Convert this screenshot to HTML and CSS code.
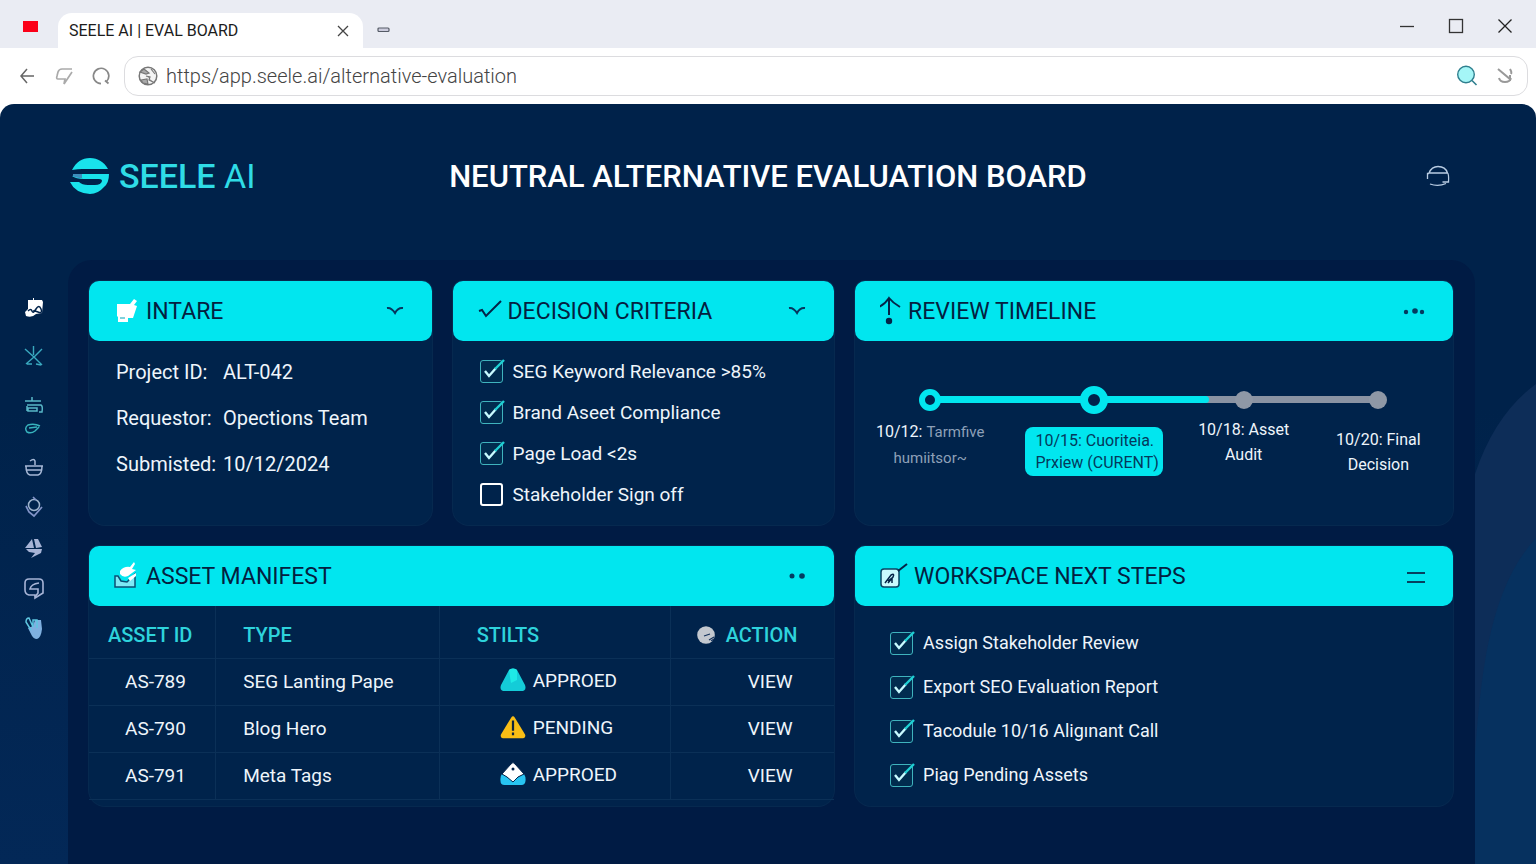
FILE: index.html
```html
<!DOCTYPE html>
<html lang="en">
<head>
  <meta charset="utf-8">
  <title>SEELE AI | EVAL BOARD</title>
  <link rel="stylesheet" href="styles.css">
</head>
<body>
<svg class="sprite" width="0" height="0" aria-hidden="true">
  <symbol id="tick" viewBox="0 0 28 28">
    <path d="M7 14l4 5 7-8" fill="none" stroke="#c9fbff" stroke-width="2.4"/>
    <path d="M17 12l9-9" fill="none" stroke="#1fd0d4" stroke-width="2.4"/>
  </symbol>
  <symbol id="chevron" viewBox="0 0 18 10">
    <path d="M1 2c3-.5 5.500 1 8 5 2-4 4-5.500 8-5" fill="none" stroke="#06345c" stroke-width="2"/>
  </symbol>
</svg>

<div class="tabs">
  <span class="flag"></span>
  <div class="tab">
    <span>SEELE AI | EVAL BOARD</span>
    <button class="icon-btn" aria-label="Close tab"><svg width="12" height="12" viewBox="0 0 12 12"><path d="M1 1l10 10M11 1L1 11" stroke="#444" stroke-width="1.300"/></svg></button>
  </div>
  <button class="icon-btn new-tab" aria-label="New tab"><svg width="14" height="6" viewBox="0 0 14 6"><rect x="1" y="1" width="11" height="3.500" rx="1" fill="#ccd" stroke="#555b66" stroke-width="1.200"/></svg></button>
  <div class="window">
    <button class="icon-btn" aria-label="Minimize"><svg width="16" height="16" viewBox="0 0 16 16"><path d="M1 8.500h14" stroke="#333" stroke-width="1.300"/></svg></button>
    <button class="icon-btn" aria-label="Maximize"><svg width="16" height="16" viewBox="0 0 16 16"><rect x="1.500" y="1.500" width="13" height="13" fill="none" stroke="#333" stroke-width="1.300"/></svg></button>
    <button class="icon-btn" aria-label="Close"><svg width="16" height="16" viewBox="0 0 16 16"><path d="M1.500 1.500l13 13M14.500 1.500l-13 13" stroke="#222" stroke-width="1.300"/></svg></button>
  </div>
</div>

<div class="toolbar">
  <button class="icon-btn" aria-label="Back"><svg width="18" height="18" viewBox="0 0 18 18"><path d="M16 9H3M9 2L3 9l6 7" fill="none" stroke="#666" stroke-width="1.500"/></svg></button>
  <button class="icon-btn" aria-label="Forward"><svg width="18" height="18" viewBox="0 0 18 18"><path d="M17 5l-8 12 1-5H3q-2 0-1-3l1-4q1-3 4-3h10" fill="none" stroke="#aaa" stroke-width="1.700"/></svg></button>
  <button class="icon-btn" aria-label="Reload"><svg width="18" height="18" viewBox="0 0 18 18"><path d="M14.500 14.500A7.700 7.700 0 1 0 9 16.700M13 13.500l3.500 3" fill="none" stroke="#888" stroke-width="1.700"/></svg></button>
  <div class="address">
    <svg width="20" height="20" viewBox="0 0 20 20"><circle cx="10" cy="10" r="8.800" fill="#f4f4f4" stroke="#777" stroke-width="1.500"/><path d="M2 6l4-3 5 4-3 1-6-2zM8 10l4 1-1 3 6 3M3 14l6-1 1 5-5-1zM13 3l4 5" fill="#aaa" stroke="#777" stroke-width="1.200"/></svg>
    <input type="text" aria-label="Address" value="https/app.seele.ai/alternative-evaluation">
    <button class="icon-btn" aria-label="Search"><svg width="22" height="22" viewBox="0 0 22 22"><circle cx="10" cy="9.500" r="8.300" fill="#a5f6f7" stroke="#2f7f8e" stroke-width="1.400"/><path d="M16 15.500l4.500 4.500" stroke="#2f7f8e" stroke-width="1.600"/></svg></button>
    <button class="icon-btn" aria-label="Extensions"><svg width="18" height="18" viewBox="0 0 18 18"><path d="M2 2l12 10V8M14 2q2 3 1 5M3 11q1 4 6 4 5 0 6-4" fill="none" stroke="#999" stroke-width="2"/></svg></button>
  </div>
</div>

<div class="app">
  <svg class="hills" viewBox="0 0 61 480" aria-hidden="true">
    <path d="M0 90Q20 30 61 0V480H0Z" fill="#0d2d58"/>
    <path d="M0 480V370C6 290 14 205 61 154V480Z" fill="#06315f"/>
  </svg>

  <header class="top">
    <a class="logo" href="#">
      <svg width="40" height="36" viewBox="0 0 40 36" fill="#19e3ec">
        <path d="M2 12C6 4 12 0 20 0s14 4 18 11H12q-4 0-10 1z"/>
        <path d="M2 18l9-2h28q0 9-5 13-6 7-14 7Q5 35 0 24h9q3 3 9 3h7q6 0 7-4 0-2-3-2H14Q6 21 2 18z"/>
        <path d="M3 16h9v4q-6 0-9-2z" fill="#3d8ebc"/>
      </svg>
      <span><b>SEELE</b> AI</span>
    </a>
    <h1>NEUTRAL ALTERNATIVE EVALUATION BOARD</h1>
    <button class="icon-btn profile" aria-label="Profile"><svg width="24" height="24" viewBox="0 0 24 24"><path d="M3 9C5 4 8 2.500 12 2.500S20 4 21.500 9zM1.500 15V9.500H3M21.500 9q1.500 1 1 9h-6M4 20q8 3 16-.5" fill="none" stroke="#b9cde3" stroke-width="1.300"/></svg></button>
  </header>

  <div class="main">
    <nav>
      <a href="#" aria-label="Home"><svg width="20" height="24" viewBox="0 0 20 24"><path d="M4 4h5V2h1v2h8l1 2-1 11-6 1q-4 4-10 2l-1-4 3-3z" fill="#fff"/><path d="M4 15q3-3 4 0t4-2 5 0-3 3-4-1" fill="none" stroke="#00224a" stroke-width="1.500"/></svg></a>
      <a href="#" aria-label="Explore"><svg width="20" height="24" viewBox="0 0 20 24"><path d="M9.500 2v9M1 5l9 8 8-8M10 13l-8 7M10 13l8 8M3 20h5M12 20l5 1" fill="none" stroke="#39a9bf" stroke-width="1.400"/></svg></a>
      <a href="#" aria-label="Files"><svg width="20" height="38" viewBox="0 0 20 38"><path d="M8 1v4M1 5h16M3 9h14q2 1 1 7h-3M4 12h9v3H4zM3 15v-5" fill="none" stroke="#58b8c8" stroke-width="1.500"/><path d="M16 30q-6-3-12-1-4 3-1 7 4 2 8-1l4-4M5 32l8-1" fill="none" stroke="#37b3bd" stroke-width="1.500"/></svg></a>
      <a href="#" aria-label="Inbox"><svg width="20" height="24" viewBox="0 0 20 24"><path d="M1 10h18M2 10q0 8 4 9h8q4-1 4-9M3 14h14M6 5q4-3 5 0v4" fill="none" stroke="#a6b8d6" stroke-width="1.500"/></svg></a>
      <a href="#" aria-label="Reports"><svg width="20" height="24" viewBox="0 0 20 24"><circle cx="10" cy="9" r="5.500" fill="none" stroke="#9fb4cc" stroke-width="1.500"/><path d="M2 10l3 6 5 4 8-9M9 1l3 3" fill="none" stroke="#8294c8" stroke-width="1.700"/></svg></a>
      <a href="#" aria-label="Activity"><svg width="20" height="24" viewBox="0 0 20 24"><path d="M1 12l7-9 2 9zM10 3h4l4 8-6 1zM2 13h16l-1 4-10 5 4-5-6-1z" fill="#a7b4d6"/></svg></a>
      <a href="#" aria-label="Messages"><svg width="20" height="24" viewBox="0 0 20 24"><path d="M5 3h10q4 0 4 4v10l-8 5v-3H5q-4-1-4-5V7q0-4 4-4z" fill="none" stroke="#a7b4d6" stroke-width="1.600"/><path d="M15 7Q7 8 6 13h8v4l-3 4" fill="none" stroke="#a7b4d6" stroke-width="1.600"/></svg></a>
      <a href="#" aria-label="Tools"><svg width="20" height="24" viewBox="0 0 20 24"><path d="M9 10l2-6h6l1 9q-1 9-5 10-4 0-6-5l-3-6z" fill="#7fb0e0"/><path d="M7 14L2 6q0-4 3-4l4 9V4h4v8" fill="none" stroke="#5ec6e0" stroke-width="1.500"/></svg></a>
    </nav>

    <main class="board">
      <section class="card">
        <div class="card-head">
          <svg width="26" height="26" viewBox="0 0 26 26"><path d="M3 6h13l4-5 3 2-3 4 3 1-4 12h-5v4H4v-5l-1-1z" fill="#fff"/><path d="M6 20h5" stroke="#00a5b8"/></svg>
          <h2>INTARE</h2>
          <button class="icon-btn" aria-label="Collapse"><svg width="18" height="10"><use href="#chevron"/></svg></button>
        </div>
        <dl>
          <dt>Project ID:</dt><dd>ALT-042</dd>
          <dt>Requestor:</dt><dd>Opections Team</dd>
          <dt>Submisted:</dt><dd>10/12/2024</dd>
        </dl>
      </section>

      <section class="card">
        <div class="card-head">
          <svg width="24" height="26" viewBox="0 0 24 26"><path d="M1 13l3-1 4 6L23 3" fill="none" stroke="#042447" stroke-width="2"/></svg>
          <h2>DECISION CRITERIA</h2>
          <button class="icon-btn" aria-label="Collapse"><svg width="18" height="10"><use href="#chevron"/></svg></button>
        </div>
        <ul class="checks">
          <li><label><span class="box"><input type="checkbox" checked><svg><use href="#tick"/></svg></span>SEG Keyword Relevance &gt;85%</label></li>
          <li><label><span class="box"><input type="checkbox" checked><svg><use href="#tick"/></svg></span>Brand Aseet Compliance</label></li>
          <li><label><span class="box"><input type="checkbox" checked><svg><use href="#tick"/></svg></span>Page Load &lt;2s</label></li>
          <li><label><span class="box"><input type="checkbox"><svg><use href="#tick"/></svg></span>Stakeholder Sign off</label></li>
        </ul>
      </section>

      <section class="card">
        <div class="card-head">
          <svg width="22" height="30" viewBox="0 0 22 30"><path d="M9 2v17M-1 11Q5 8 9 2q4 5 11 9" fill="none" stroke="#042447" stroke-width="2"/><circle cx="9" cy="25" r="3.200" fill="#042447"/></svg>
          <h2>REVIEW TIMELINE</h2>
          <button class="icon-btn" aria-label="More"><svg width="22" height="10" viewBox="0 0 22 10" fill="#043a60"><circle cx="3" cy="6" r="2.200"/><circle cx="12" cy="5" r="2.800"/><circle cx="19" cy="6" r="2.200"/></svg></button>
        </div>
        <div class="timeline">
          <div class="track"><span style="width: 62%"></span></div>
          <ol>
            <li class="done"><i></i><p>10/12: <small>Tarmfive<br>humiitsor~</small></p></li>
            <li class="current"><i></i><p>10/15: Cuoriteia.<br>Prxiew (CURENT)</p></li>
            <li><i></i><p>10/18: Asset<br>Audit</p></li>
            <li class="last"><i></i><p>10/20: Final<br>Decision</p></li>
          </ol>
        </div>
      </section>

      <section class="card wide">
        <div class="card-head">
          <svg width="26" height="28" viewBox="0 0 26 28"><path d="M1 14v11h20V12l-8 8-6-1-3-5z" fill="#7de9f5" stroke="#0a4f74" stroke-width="1.500"/><path d="M6 9q4-5 10-4l4-5 1 2-3 5 4 1-8 6q-5 2-8-2zM14 16l8-5v3l-6 5z" fill="#fff"/></svg>
          <h2>ASSET MANIFEST</h2>
          <button class="icon-btn" aria-label="More"><svg width="18" height="10" viewBox="0 0 18 10" fill="#043a60"><circle cx="4" cy="5" r="2.500"/><circle cx="14" cy="5" r="2.800"/></svg></button>
        </div>
        <table>
          <thead>
            <tr>
              <th>ASSET ID</th>
              <th>TYPE</th>
              <th>STILTS</th>
              <th><svg width="18" height="18" viewBox="0 0 18 18"><circle cx="9" cy="9" r="8.800" fill="#c3c8cf"/><path d="M7 10l6-2M12 14l5-3M14 15l3-2" stroke="#12305a" stroke-width="1.200"/></svg>ACTION</th>
            </tr>
          </thead>
          <tbody>
            <tr>
              <td>AS-789</td>
              <td>SEG Lanting Pape</td>
              <td><svg width="26" height="24" viewBox="0 0 26 24"><path d="M9 2q1-1.500 4-1.500T17 2l8 15q2 6-4 6H5q-6 0-4-6z" fill="#14ccd8"/><path d="M9 2q1-1.500 4-1.500T17 2l0 10-6 3-1-6z" fill="#1eeae6"/></svg>APPROED</td>
              <td><a href="#">VIEW</a></td>
            </tr>
            <tr>
              <td>AS-790</td>
              <td>Blog Hero</td>
              <td><svg width="26" height="24" viewBox="0 0 28 24"><path d="M12 2q2-3 4 0l11 18q1 4-2 4H3q-3 0-2-4z" fill="#f9be15"/><path d="M14 5v11M14 18v3" stroke="#10243c" stroke-width="2.400"/></svg>PENDING</td>
              <td><a href="#">VIEW</a></td>
            </tr>
            <tr>
              <td>AS-791</td>
              <td>Meta Tags</td>
              <td><svg width="26" height="24" viewBox="0 0 26 24"><path d="M2 12l11 6 11-6q2 3 1.500 7-.5 4-4 4h-17q-4 0-4-4Q0 14 2 12z" fill="#27c4f2"/><path d="M11 2q2-3 4 0l9 10-6 3-5 5-6-5-5-3z" fill="#fff" stroke="#00224a"/><circle cx="13" cy="7" r="1.500" fill="#00224a"/></svg>APPROED</td>
              <td><a href="#">VIEW</a></td>
            </tr>
          </tbody>
        </table>
      </section>

      <section class="card">
        <div class="card-head">
          <svg width="28" height="26" viewBox="0 0 28 26"><rect x="1" y="6" width="18" height="18" rx="3" fill="#c8fafd" stroke="#0a4463" stroke-width="1.500"/><path d="M18 8l9-7" stroke="#042447" stroke-width="2"/><path d="M5 20l6-8q4-2 2 2l-5 6M8 18l4-3v5" fill="none" stroke="#042447" stroke-width="1.500"/></svg>
          <h2>WORKSPACE NEXT STEPS</h2>
          <button class="icon-btn" aria-label="Menu"><svg width="18" height="14" viewBox="0 0 18 14"><path d="M0 4h18M0 13h18" stroke="#06405f" stroke-width="1.800"/></svg></button>
        </div>
        <ul class="checks steps">
          <li><label><span class="box"><input type="checkbox" checked><svg><use href="#tick"/></svg></span>Assign Stakeholder Review</label></li>
          <li><label><span class="box"><input type="checkbox" checked><svg><use href="#tick"/></svg></span>Export SEO Evaluation Report</label></li>
          <li><label><span class="box"><input type="checkbox" checked><svg><use href="#tick"/></svg></span>Tacodule 10/16 Aligınant Call</label></li>
          <li><label><span class="box"><input type="checkbox" checked><svg><use href="#tick"/></svg></span>Piag Pending Assets</label></li>
        </ul>
      </section>
    </main>
  </div>
</div>
</body>
</html>
```

FILE: styles.css
```css
* {
  box-sizing: border-box;
}
body {
  margin: 0;
  min-height: 100vh;
  display: flex;
  flex-direction: column;
  background: #fff;
  font-family: Roboto, "Liberation Sans", sans-serif;
  font-size: 19px;
  color: #eef5fb;
}
h1, h2, p, ul, ol, dl, dd {
  margin: 0;
  padding: 0;
}
ul, ol {
  list-style: none;
}
a {
  color: inherit;
  text-decoration: none;
}
svg {
  display: block;
  flex: none;
}
.sprite {
  position: absolute;
}
.icon-btn {
  display: flex;
  align-items: center;
  justify-content: center;
  padding: 0;
  border: 0;
  background: none;
  cursor: pointer;
}

/* browser bar */
.tabs {
  display: flex;
  height: 48px;
  padding: 0 23px;
  background: #eaecf3;
}
.flag {
  width: 15px;
  height: 11px;
  margin: 21px 20px 0 0;
  background: #fb0018;
}
.tab {
  display: flex;
  align-items: center;
  justify-content: space-between;
  width: 305px;
  margin-top: 13px;
  padding: 0 14px 0 11px;
  border-radius: 14px 14px 0 0;
  background: #fff;
  color: #1c1c1c;
  font-size: 16px;
}
.new-tab {
  margin: 12px 0 0 14px;
  height: 36px;
}
.window {
  display: flex;
  gap: 33px;
  margin-left: auto;
  padding-top: 4px;
}
.toolbar {
  display: flex;
  align-items: center;
  gap: 19px;
  height: 56px;
  padding: 0 8px 0 18px;
}
.address {
  display: flex;
  flex: 1;
  align-items: center;
  gap: 8px;
  height: 40px;
  margin-left: -5px;
  padding: 0 13px;
  border: 1px solid #dcdcdf;
  border-radius: 14px;
}
.address input {
  flex: 1;
  padding: 0;
  border: 0;
  outline: 0;
  background: none;
  font: 300 20px Roboto, "Liberation Sans", sans-serif;
  color: #444;
}
.address .icon-btn:last-child {
  margin-left: 10px;
}

/* app */
.app {
  position: relative;
  display: flex;
  flex: 1;
  flex-direction: column;
  border-radius: 14px 14px 0 0;
  background: linear-gradient(#00224a 40%, #032857);
}
.hills {
  position: absolute;
  right: 0;
  bottom: 0;
  width: 61px;
  height: 480px;
}
.top {
  display: grid;
  grid-template-columns: 1fr auto 1fr;
  align-items: center;
  height: 156px;
  padding: 0 70px 12px;
}
.logo {
  display: flex;
  align-items: center;
  gap: 9px;
  color: #2fdce6;
  font-size: 34px;
}
.logo b {
  font-weight: 500;
}
h1 {
  color: #fff;
  font-size: 31px;
  font-weight: 500;
}
.profile {
  justify-self: end;
  width: 56px;
  height: 40px;
}
.main {
  display: flex;
  flex: 1;
}
nav {
  display: flex;
  flex-direction: column;
  align-items: center;
  gap: 16px;
  width: 68px;
  padding-top: 36px;
}
nav a:first-child {
  margin-bottom: 8px;
}
nav a:nth-child(3) {
  margin: 12px 0 6px;
}

/* cards */
.board {
  display: grid;
  flex: 1;
  grid-template-columns: 342fr 381fr 597fr;
  grid-template-rows: 244px 260px;
  gap: 21px;
  margin-right: 61px;
  padding: 21px 22px 58px 21px;
  border-radius: 24px 24px 0 0;
  background: #001b44;
  position: relative;
}
.card {
  border-radius: 10px 10px 16px 16px;
  background: #00234b;
  box-shadow: 0 0 0 1px #06294f;
}
.wide {
  grid-column: span 2;
}
.card-head {
  display: flex;
  align-items: center;
  gap: 6px;
  height: 60px;
  padding: 0 28px 0 25px;
  border-radius: 10px;
  background: #01e6ef;
  color: #04203f;
}
.card-head .icon-btn {
  margin-left: auto;
}
h2 {
  font-size: 23px;
  font-weight: 400;
}
dl {
  display: grid;
  grid-template-columns: 107px 1fr;
  padding: 8px 27px;
  font-size: 20px;
  line-height: 46px;
}
.checks {
  padding: 10px 27px;
  line-height: 41px;
}
.steps {
  padding: 15px 35px;
  font-size: 18px;
  line-height: 44px;
}
.checks label {
  display: flex;
  align-items: center;
  gap: 10px;
}
.box {
  position: relative;
  height: 23px;
}
.box input {
  display: block;
  appearance: none;
  width: 23px;
  height: 23px;
  margin: 0;
  border: 2px solid #fff;
  border-radius: 3px;
}
.box input:checked {
  border: 1px solid #3fb3bd;
  background: #012c4f;
}
.box svg {
  display: none;
  position: absolute;
  left: -2px;
  top: -3px;
  width: 28px;
  height: 28px;
  pointer-events: none;
}
.box input:checked + svg {
  display: block;
}

/* timeline */
.timeline {
  position: relative;
  padding-top: 45px;
  font-size: 16px;
  line-height: 25px;
  text-align: center;
}
.track {
  position: absolute;
  left: 74px;
  right: 72px;
  top: 55px;
  height: 7px;
  background: #8a93a3;
}
.track span {
  display: block;
  height: 7px;
  border-radius: 0 4px 4px 0;
  background: #01e6ef;
}
.timeline ol {
  display: grid;
  grid-template-columns: 150fr 178fr 120fr 149fr;
  position: relative;
}
.timeline li {
  display: flex;
  flex-direction: column;
  align-items: center;
}
.timeline i {
  width: 18px;
  height: 18px;
  margin: 5px 0 8px;
  border-radius: 50%;
  background: #8f98a6;
}
.timeline .done i {
  width: 22px;
  height: 22px;
  margin: 3px 0 8px;
  border: 6px solid #01e6ef;
  background: #00234b;
}
.timeline .current i {
  width: 28px;
  height: 28px;
  margin: 0 0 13px;
  border: 8px solid #01e6ef;
  background: #00234b;
}
.timeline small {
  color: #8ea0b8;
  font-size: 15px;
}
.current p {
  width: 138px;
  height: 49px;
  padding: 3px 0 0 10px;
  border-radius: 8px;
  background: #01e6ef;
  color: #04395c;
  line-height: 22px;
  text-align: left;
  white-space: nowrap;
}
.last p {
  margin-top: 10px;
}

/* asset table */
table {
  width: 100%;
  table-layout: fixed;
  border-collapse: collapse;
}
th {
  height: 52px;
  padding: 6px 0 0;
  border-bottom: 1px solid #0b3057;
  color: #2ed3dc;
  font-size: 20px;
  font-weight: 500;
  text-align: left;
}
td {
  height: 47px;
  padding: 0;
  border-bottom: 1px solid #0b3057;
}
th + th, td + td {
  border-left: 1px solid #0b3057;
}
th:nth-child(1) {
  width: 17%;
  padding-left: 19px;
}
th:nth-child(2) {
  width: 30%;
}
th:nth-child(3) {
  width: 31%;
  padding-left: 37px;
}
th:nth-child(4) {
  padding-left: 26px;
}
td:nth-child(1) {
  padding-left: 36px;
}
th:nth-child(2), td:nth-child(2) {
  padding-left: 27px;
}
td:nth-child(3) {
  padding-left: 60px;
}
td:nth-child(4) {
  padding-left: 77px;
}
th svg, td svg {
  display: inline-block;
  vertical-align: middle;
}
th svg {
  margin: 0 11px 3px 0;
}
td svg {
  margin: 0 7px 3px 0;
}
```
